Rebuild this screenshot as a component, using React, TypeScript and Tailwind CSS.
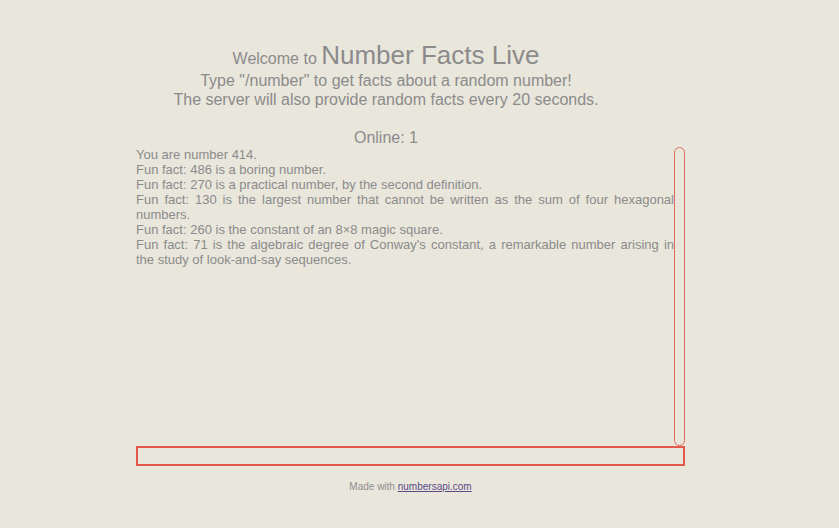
const facts = [
  'You are number 414.',
  'Fun fact: 486 is a boring number.',
  'Fun fact: 270 is a practical number, by the second definition.',
  'Fun fact: 130 is the largest number that cannot be written as the sum of four hexagonal numbers.',
  'Fun fact: 260 is the constant of an 8×8 magic square.',
  "Fun fact: 71 is the algebraic degree of Conway's constant, a remarkable number arising in the study of look-and-say sequences.",
];

export default function App() {
  return (
    <div
      className="min-h-[528px] w-full bg-[#e9e6dc] text-[#8b8b8b]"
      style={{ fontFamily: '"Liberation Sans", Arial, sans-serif' }}
    >
      <div className="w-[772px] pt-[43px] text-center">
        <div className="text-[16px] leading-[24px]">
          Welcome to <span className="text-[26px]">Number Facts Live</span>
        </div>
        <div className="text-[16px] leading-[19px]">Type "/number" to get facts about a random number!</div>
        <div className="text-[16px] leading-[19px]">The server will also provide random facts every 20 seconds.</div>
        <div className="mt-[19px] text-[16px] leading-[19px]">Online: 1</div>
      </div>

      <div className="ml-[136px] w-[549px]">
        <div className="flex h-[299px]">
          <div className="w-[538px] text-justify text-[13px] leading-[15px]">
            {facts.map((f, i) => (
              <div key={i}>{f}</div>
            ))}
          </div>
          <div className="w-[11px] rounded-full border border-[#dd6a5c]" />
        </div>
        <input className="block h-[20px] w-[549px] border-2 border-[#e2594b] bg-transparent outline-none" />
        <div className="mt-[15px] text-center text-[10px] leading-[12px] text-[#8e8e8e]">
          Made with{' '}
          <a href="#" className="text-[#5b4a86] underline">
            numbersapi.com
          </a>
        </div>
      </div>
    </div>
  );
}
